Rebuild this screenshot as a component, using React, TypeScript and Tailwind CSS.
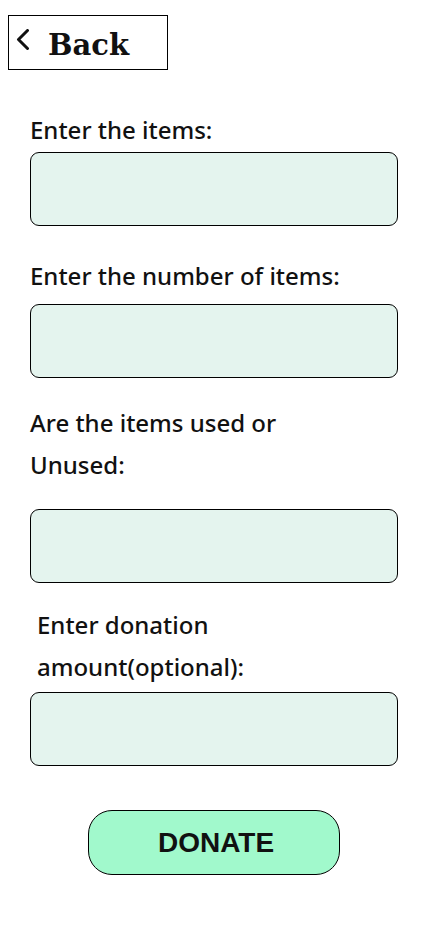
import React from "react";

function Field({ label, labelClass, inputClass }: { label: React.ReactNode; labelClass: string; inputClass: string }) {
  return (
    <div className="flex flex-col">
      <div className={labelClass}>{label}</div>
      <div className={inputClass} />
    </div>
  );
}

export default function App() {
  const inputBase = "h-[74px] w-[368px] rounded-[9px] border border-black bg-[#e4f4ee]";
  const labelBase = "text-[24px] leading-[42px] text-[#111] font-medium";
  return (
    <div className="min-h-[926px] w-[428px] bg-white" style={{ fontFamily: '"Noto Sans", sans-serif' }}>
      <div className="pl-[8px] pt-[15px]">
        <button className="flex h-[55px] w-[160px] items-start border border-black bg-white pl-[7px]">
          <svg width="14" height="21" viewBox="0 0 14 21" className="mt-[13px] shrink-0">
            <path d="M11.5 1.5 L2.5 10.5 L11.5 19.5" fill="none" stroke="#111" strokeWidth="3" strokeLinecap="round" strokeLinejoin="round" />
          </svg>
          <span
            className="ml-[18px] mt-[15px] text-[29px] font-bold leading-none text-[#111]"
            style={{ fontFamily: '"DejaVu Serif", serif' }}
          >
            Back
          </span>
        </button>
      </div>
      <div className="flex flex-col pl-[30px]">
        <Field label="Enter the items:" labelClass={`${labelBase} mt-[39px] mb-[1px]`} inputClass={inputBase} />
        <Field label="Enter the number of items:" labelClass={`${labelBase} mt-[29px] mb-[7px]`} inputClass={inputBase} />
        <Field
          label={<>Are the items used or<br />Unused:</>}
          labelClass={`${labelBase} mt-[24px] mb-[23px] w-[300px]`}
          inputClass={inputBase}
        />
        <Field
          label={<>Enter donation<br />amount(optional):</>}
          labelClass={`${labelBase} mt-[21px] mb-[4px] ml-[7px]`}
          inputClass={inputBase}
        />
      </div>
      <div className="mt-[44px] flex justify-center">
        <button
          className="flex h-[65px] w-[252px] items-center justify-center rounded-[24px] border border-black bg-[#a1f9cc] pl-[4px] text-[28px] font-bold text-[#111]"
          style={{ fontFamily: '"Liberation Sans", Arial, sans-serif' }}
        >
          DONATE
        </button>
      </div>
    </div>
  );
}
